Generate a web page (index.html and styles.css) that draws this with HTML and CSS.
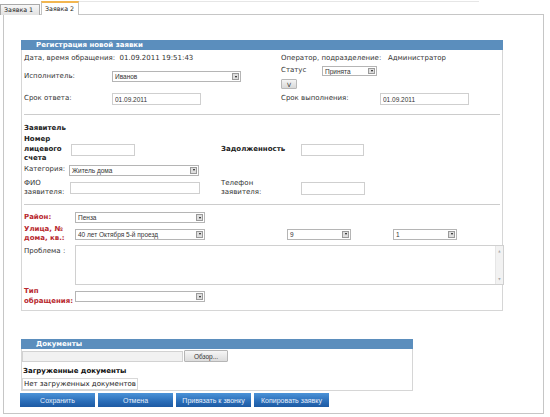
FILE: index.html
```html
<!DOCTYPE html>
<html lang="ru">
<head>
    <meta charset="UTF-8">
    <title>Заявка 2</title>
    <link rel="stylesheet" href="styles.css">
</head>
<body>
    <div class="tabs">
        <div class="tab">Заявка 1</div>
        <div class="tab active">Заявка 2</div>
        <div class="tab-rest"></div>
    </div>

    <div class="panel">
        <div class="box reg">
            <div class="box-head">Регистрация новой заявки</div>
            <div class="reg-body">
                <div class="top-grid">
                    <div class="col">
                        <div class="line">Дата, время обращения:&nbsp; 01.09.2011 19:51:43</div>
                        <div class="row row-exec">
                            <span class="lbl w88">Исполнитель:</span>
                            <div class="sel w129"><span class="sel-text">Иванов</span><span class="sel-btn"></span></div>
                        </div>
                        <div class="row row-date">
                            <span class="lbl w88">Срок ответа:</span>
                            <input class="inp w89" value="01.09.2011">
                        </div>
                    </div>
                    <div class="col">
                        <div class="line">Оператор, подразделение:&nbsp;&nbsp; Администратор</div>
                        <div class="row row-status">
                            <span class="lbl w41">Статус</span>
                            <div class="sel w55 h10"><span class="sel-text">Принята</span><span class="sel-btn"></span></div>
                        </div>
                        <button class="v-btn">V</button>
                        <div class="row row-date2">
                            <span class="lbl w99">Срок выполнения:</span>
                            <input class="inp w89" value="01.09.2011">
                        </div>
                    </div>
                </div>

                <div class="sep sep-1"></div>

                <div class="section-title">Заявитель</div>

                <div class="applicant">
                    <div class="row row-acc">
                        <span class="lbl bold w47">Номер лицевого счета</span>
                        <div class="cell w150"><input class="inp w64"></div>
                        <span class="lbl bold w80">Задолженность</span>
                        <input class="inp w63">
                    </div>
                    <div class="row row-cat">
                        <span class="lbl w45">Категория:</span>
                        <div class="sel w130"><span class="sel-text">Житель дома</span><span class="sel-btn"></span></div>
                    </div>
                    <div class="row row-fio">
                        <span class="lbl w46">ФИО заявителя:</span>
                        <div class="cell w151"><input class="inp w130"></div>
                        <span class="lbl w80 wrap">Телефон заявителя:</span>
                        <input class="inp w64 h13">
                    </div>
                </div>

                <div class="sep sep-2"></div>

                <div class="address">
                    <div class="row row-area">
                        <span class="lbl req w51">Район:</span>
                        <div class="sel w130"><span class="sel-text">Пенза</span><span class="sel-btn"></span></div>
                    </div>
                    <div class="row row-street">
                        <span class="lbl req w51">Улица, № дома, кв.:</span>
                        <div class="sel w130"><span class="sel-text">40 лет Октября 5-й проезд</span><span class="sel-btn"></span></div>
                        <div class="sel w64 house"><span class="sel-text">9</span><span class="sel-btn"></span></div>
                        <div class="sel w64 flat"><span class="sel-text">1</span><span class="sel-btn"></span></div>
                    </div>
                    <div class="row row-problem">
                        <span class="lbl w51">Проблема :</span>
                        <div class="textarea">
                            <div class="ta-field"></div>
                            <div class="ta-scroll"><span class="up">▲</span><span class="down">▼</span></div>
                        </div>
                    </div>
                    <div class="row row-type">
                        <span class="lbl req w51">Тип обращения:</span>
                        <div class="sel w130"><span class="sel-text"></span><span class="sel-btn"></span></div>
                    </div>
                </div>
            </div>
        </div>

        <div class="box docs">
            <div class="box-head">Документы</div>
            <div class="file-row">
                <div class="file-field"></div>
                <button class="browse-btn">Обзор...</button>
            </div>
            <div class="docs-title">Загруженные документы</div>
            <div class="docs-empty">Нет загруженных документов</div>
        </div>

        <div class="actions">
            <button class="act-btn">Сохранить</button>
            <button class="act-btn">Отмена</button>
            <button class="act-btn">Привязать к звонку</button>
            <button class="act-btn">Копировать заявку</button>
        </div>
    </div>
</body>
</html>
```

FILE: styles.css
```css
* {
    margin: 0;
    padding: 0;
    box-sizing: border-box;
}

:root {
    --bar-blue: #5b8ebd;
    --panel-line: #c6c6c6;
    --box-line: #d6d6d6;
    --text: #333333;
    --red: #b8282e;
}

body {
    background: #ffffff;
    font-family: "DejaVu Sans", Verdana, sans-serif;
    font-size: 7px;
    color: var(--text);
}

/* Tabs */
.tabs {
    display: flex;
    align-items: flex-end;
    height: 15px;
    padding-top: 1px;
}

.tab {
    width: 40px;
    height: 11px;
    padding-left: 3px;
    border: 1px solid #a9a9a9;
    border-bottom: none;
    background: linear-gradient(#f7f7f7, #e2e2e2);
    font-size: 6.3px;
    line-height: 10px;
    color: #222;
    white-space: nowrap;
}

.tab.active {
    position: relative;
    z-index: 1;
    width: 38px;
    height: 14px;
    margin-left: 1px;
    padding-left: 3px;
    border-color: #c2c2c2;
    border-top: 2px solid #f2b650;
    background: #ffffff;
    line-height: 11px;
}

.tab-rest {
    align-self: flex-start;
    width: 400px;
    border-top: 1px solid #e6e6e6;
}

/* Main panel */
.panel {
    width: 541px;
    height: 400px;
    margin: -1px 0 0 3px;
    padding: 25px 0 0 17px;
    border: 1px solid var(--panel-line);
}

.box {
    border: 1px solid var(--box-line);
    border-top: none;
}

.box-head {
    height: 10px;
    margin: 0 -1px;
    padding-left: 15px;
    background: var(--bar-blue);
    color: #ffffff;
    font-weight: bold;
    font-size: 7px;
    line-height: 10px;
}

.reg {
    width: 482px;
    height: 271px;
}

.reg-body {
    padding: 0 2px;
}

.top-grid {
    display: grid;
    grid-template-columns: 257px 1fr;
}

.line {
    height: 10px;
    margin-top: 3px;
    line-height: 10px;
}

.row {
    display: flex;
    align-items: center;
}

.row-exec { height: 11px; margin-top: 8px; }
.row-date { height: 12px; margin-top: 11px; }
.row-status { height: 10px; margin-top: 3px; }
.row-date2 { height: 12px; margin-top: 4px; }

.lbl {
    flex-shrink: 0;
    line-height: 9.5px;
}

.lbl.wrap {
    padding-right: 34px;
}

.bold { font-weight: bold; color: #222; }
.req { font-weight: bold; color: var(--red); }

.w41 { width: 41px; }
.w45 { width: 45px; }
.w46 { width: 46px; }
.w47 { width: 47px; }
.w51 { width: 51px; }
.w55 { width: 55px; }
.w63 { width: 63px; }
.w64 { width: 64px; }
.w80 { width: 80px; }
.w88 { width: 88px; }
.w89 { width: 89px; }
.w99 { width: 99px; }
.w129 { width: 129px; }
.w130 { width: 130px; }
.w150 { width: 150px; }
.w151 { width: 151px; }

.cell {
    flex-shrink: 0;
    display: flex;
    align-items: center;
}

/* Form controls */
.inp {
    flex-shrink: 0;
    height: 12px;
    padding-left: 2px;
    border: 1px solid #cfcfcf;
    background: #ffffff;
    font-family: "Liberation Sans", Arial, sans-serif;
    font-size: 6.5px;
    color: #333;
    outline: none;
}

.h13 { height: 13px; }

.sel {
    flex-shrink: 0;
    display: flex;
    height: 11px;
    border: 1px solid #b5b5b5;
    background: #ffffff;
    font-family: "Liberation Sans", Arial, sans-serif;
    font-size: 6.5px;
    color: #333;
}

.sel.h10 { height: 10px; }

.sel-text {
    flex: 1;
    padding-left: 2px;
    line-height: 9px;
    white-space: nowrap;
    overflow: hidden;
}

.sel-btn {
    display: flex;
    align-items: center;
    justify-content: center;
    width: 7px;
    margin: 1px;
    border: 1px solid #9a9a9a;
    background: #dedede;
}

.sel-btn::after {
    content: "";
    border-left: 1.5px solid transparent;
    border-right: 1.5px solid transparent;
    border-top: 2px solid #111;
}

.v-btn {
    display: block;
    width: 16px;
    height: 10px;
    margin-top: 3px;
    border: 1px solid #b8b8b8;
    border-radius: 1px;
    background: linear-gradient(#f4f4f4, #d8d8d8);
    font-family: "DejaVu Sans", Verdana, sans-serif;
    font-size: 6px;
    color: #333;
}

.sep {
    height: 1px;
    background: #cccccc;
}

.sep-1 { margin-top: 9px; }
.sep-2 { margin-top: 6px; }

.section-title {
    height: 10px;
    margin-top: 8px;
    font-weight: bold;
    color: #222;
    line-height: 10px;
}

/* Applicant */
.applicant {
    margin-top: 2px;
}

.row-acc { height: 29px; }
.row-cat { height: 12px; margin-top: 0; }
.row-fio { height: 20px; margin-top: 2px; }

/* Address */
.row-area { height: 11px; margin-top: 7px; }
.row-street { height: 20px; margin-top: 1px; }
.row-street .house { margin-left: 82px; }
.row-street .flat { margin-left: 42px; }

.row-problem {
    align-items: flex-start;
    height: 40px;
    margin-top: 1px;
}

.row-problem .lbl {
    padding-top: 2px;
}

.textarea {
    flex: 1;
    display: flex;
    height: 40px;
    margin-right: -4px;
    border: 1px solid #d0d0d0;
    background: #ffffff;
}

.ta-field {
    flex: 1;
}

.ta-scroll {
    display: flex;
    flex-direction: column;
    justify-content: space-between;
    align-items: center;
    width: 8px;
    padding: 3px 0;
    background: #f2f2f2;
    border-left: 1px solid #e6e6e6;
    font-size: 3px;
    color: #aaa;
}

.row-type { height: 19px; margin-top: 2px; }

/* Documents */
.docs {
    width: 392px;
    height: 52px;
    margin-top: 28px;
}

.file-row {
    display: flex;
    align-items: center;
    height: 12px;
    margin-top: 1px;
}

.file-field {
    width: 161px;
    height: 11px;
    border: 1px solid #d2d2d2;
    background: #f1f1f1;
}

.browse-btn {
    width: 44px;
    height: 12px;
    margin-left: 1px;
    border: 1px solid #b5b5b5;
    border-radius: 1px;
    background: linear-gradient(#f6f6f6, #dcdcdc);
    font-family: "Liberation Sans", Arial, sans-serif;
    font-size: 6.5px;
    color: #333;
}

.docs-title {
    height: 10px;
    margin-top: 4px;
    padding-left: 1px;
    font-weight: bold;
    color: #111;
    line-height: 10px;
}

.docs-empty {
    display: inline-block;
    height: 12px;
    margin-top: 2px;
    padding: 0 1px;
    border: 1px solid #d8d8d8;
    color: #222;
    line-height: 10px;
}

/* Action buttons */
.actions {
    display: flex;
    gap: 3px;
    margin-top: 2px;
    margin-left: -1px;
}

.act-btn {
    width: 75px;
    height: 14px;
    border: none;
    background: linear-gradient(#4c93d8, #2a6db8 60%, #1d5aa3);
    font-family: "Liberation Sans", Arial, sans-serif;
    font-size: 7px;
    color: #e6eefa;
}
```
